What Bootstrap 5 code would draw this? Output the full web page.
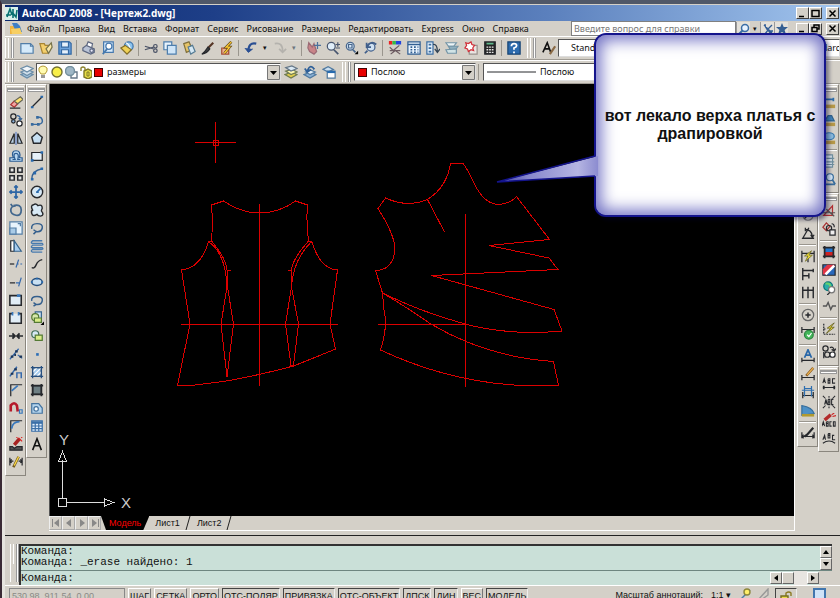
<!DOCTYPE html>
<html lang="ru">
<head>
<meta charset="utf-8">
<meta name="viewport" content="width=device-width, initial-scale=1">
<title>AutoCAD 2008 - [Чертеж2.dwg]</title>
<link href="https://cdn.jsdelivr.net/npm/bootstrap@5.3.0/dist/css/bootstrap.min.css" rel="stylesheet">
<style>
:root{--face:#d4d0c8;--dim:#808080;--mint:#cae0d8}
body{background:var(--face);font-family:"Noto Sans","Liberation Sans",sans-serif;font-size:9px;line-height:12px;color:#111;overflow:hidden}
button,select,input{font:inherit;color:inherit;border-radius:0}
.app{height:100vh;border-top:4px solid #505868;border-left:2px solid #3a2a35;box-shadow:inset 3px 0 0 #e6e4de}
.inner{padding-left:3px;min-height:0}
.titlebar{height:16px;margin-top:1px;background:linear-gradient(90deg,#0c2a70,#1e3f88 25%,#5b80bd 65%,#a2c5ee);color:#fff;font:bold 10px/15px "Noto Sans",sans-serif;padding-right:1px}
.wbtn{width:13px;height:12px;padding:0;border:1px solid;border-color:#fff #404040 #404040 #fff;background:var(--face);display:flex;align-items:center;justify-content:center}
.wbtn svg{width:9px;height:9px;stroke:#000;fill:none;stroke-width:1.5}
.menubar{height:15px;padding-right:1px}
.menus{gap:8px}
.menubar a{color:#111;text-decoration:none;white-space:nowrap}
.ask{width:165px;height:15px;border:1px solid #808080;background:#fff;color:#777;padding:0 2px}
.ask::placeholder{color:#777;opacity:1}
.mini{width:14px;height:14px;padding:0;border:0;border-left:1px solid #999;background:#e4e1da;display:flex;align-items:center;justify-content:center}
.mini svg{width:12px;height:12px}
.bar{height:24px;border-top:1px solid #fff;border-bottom:1px solid #a09c94}
.grip{width:8px;height:20px;flex:none;border:solid #fff;border-width:0 1px;box-shadow:1px 0 0 #999,inset -1px 0 0 #999}
.grip::before{content:"";display:block;width:2px;height:20px;margin-left:1px;border-right:1px solid #fff}
.tb{width:19px;height:18px;flex:none;padding:0;border:0;background:none;display:flex;align-items:center;justify-content:center}
.tb svg{width:14px;height:14px}
.ic{fill:none;flex:none}
.ic:not([stroke]){stroke:#26282c}
.ic:not([stroke-width]){stroke-width:1.4}
.drop{width:10px;height:18px;padding:0;border:0;background:none;font-size:7px;line-height:18px;flex:none}
.vsep{width:1px;height:16px;margin:0 2px;background:#9a968e;flex:none}
.hsep{height:1px;margin:2px 1px 1px;background:#9a968e;border-bottom:1px solid #fff;box-sizing:content-box}
.combo{height:18px;background:#fff;border:1px solid #555;border-right-color:#ddd;border-bottom-color:#ddd;display:flex;align-items:center}
.combo select{appearance:none;border:0;background:#fff;flex:1 1 0;min-width:0;height:16px;padding:0 2px;line-height:14px}
.combo select.arrow{background:#fff url("data:image/svg+xml,%3Csvg xmlns='http://www.w3.org/2000/svg' width='13' height='15'%3E%3Cpath d='M.5.5h12v14H.5z' fill='%23d4d0c8' stroke='%23777'/%3E%3Cpath d='M3 6h7l-3.500 4z'/%3E%3C/svg%3E") right center no-repeat}
.combo .inset{padding-left:12px}
.dims{width:31px}
.layers{width:245px;gap:2px}.colors{width:122px;padding-left:3px}
.ltype{padding-left:3px;margin-right:100px}
.swatch{width:9px;height:9px;background:#e80000;border:1px solid #400;flex:none}
.stage{min-height:0}
.center{min-width:0}
.side{width:44px;flex:none}
.side .panel{width:21px;border:1px solid;border-color:#fff #8a867e #8a867e #fff}
.side.right{width:46px;padding-left:2px;border-left:1px solid #fff}
.panel.end{padding-bottom:4px}
.hgrip{height:3px;margin:1px 1px 4px;border-top:1px solid #fff;border-bottom:1px solid #999;box-shadow:0 3px 0 -1px #fff,0 3px 0 #999}
.field{background:#000;min-height:0;overflow:hidden;border-left:1px solid #555}
.field svg{display:block;width:745px}
.tabs{height:15px;border-bottom:1px solid #fff;font:9px/14px "Liberation Sans",sans-serif}
.tabs .page{width:13px;height:14px;padding:0;border:1px solid;border-color:#eee #aaa #aaa #eee;background:var(--face);display:flex;align-items:center;justify-content:center}
.page svg{width:10px;height:10px;fill:#888}
.sheet{border:0;padding:0 5px 0 6px;height:14px;background:none;font:inherit}
.sheet.on{background:#000;color:#f00;padding:0 8px;clip-path:polygon(0 0,100% 0,calc(100% - 6px) 100%,5px 100%)}
.slash{width:6px;height:14px;stroke:#222;fill:none}
.splitter{height:5px;border-bottom:1px solid #222}
.command{padding:8px 8px 0 5px;height:50px;border-bottom:1px solid #fff}
.cgrip{height:38px;margin-right:1px}
.console{border-top:2px solid #333;border-left:2px solid #333;font:11px/11px "Liberation Mono",monospace;background:var(--face)}
.log{height:25px;background:var(--mint);border-bottom:1px solid #6e8680}
.log p{margin:0;white-space:pre}
.prompt{background:var(--mint);height:14px}
.prompt input{border:0;background:none;padding:0;min-width:0;outline:0}
.gutter{width:13px;height:14px;background:#e8e5e1}
.corner{width:13px;height:14px;background:var(--face)}
.sb{width:12px;height:12px;padding:0;border:1px solid;border-color:#fff #666 #666 #fff;background:var(--face);display:flex;align-items:center;justify-content:center}
.sb svg{width:6px;height:6px;fill:#000}
.status{height:12px;overflow:hidden;padding:2px 14px 0 4px;font:9px/14px "Liberation Sans",sans-serif;white-space:nowrap;color:#111}
.modes{gap:3px}
.coords{width:116px;height:18px;border:1px solid #888;color:#8a8a86;padding-left:2px;margin-right:3px}
.mode{height:18px;border:1px solid;border-color:#fff #777 #777 #fff;background:none;padding:0 1px 2px;line-height:14px;white-space:nowrap}
.mode.down{border-color:#444 #eee #eee #444}
.callout{position:absolute;top:29px;right:14px;width:232px;height:184px;z-index:5}
.bubble{height:100%;border:2px solid #14148c;border-radius:12px;background:#fff;box-shadow:inset 0 0 16px 5px #7272c4,3px 3px 4px rgba(0,0,40,.45);font:bold 16px/18px "Liberation Sans",sans-serif;color:#111;text-align:center}
.tail{position:absolute;right:calc(100% - 4px);top:121px;width:102px;height:30px}
</style>
<script src="https://cdn.jsdelivr.net/npm/bootstrap@5.3.0/dist/js/bootstrap.bundle.min.js"></script>
</head>
<body>
<div class="app d-flex flex-column position-relative">
<div class="inner d-flex flex-column flex-grow-1">

<header class="titlebar d-flex align-items-center flex-shrink-0">
  <svg width="13" height="13" viewBox="0 0 13 13" class="me-1 flex-shrink-0"><path fill="#d8efe9" d="M0 0h13v13H0z"/><path d="M2 10l3-8 2 6M1 8h5M8 2v9M7 5l4 5 1-7" stroke="#087070" stroke-width="1.600" fill="none"/></svg>
  <span class="flex-grow-1">AutoCAD 2008 - [Чертеж2.dwg]</span>
  <button class="wbtn" aria-label="Свернуть"><svg viewBox="0 0 9 9"><path d="M1 7.500h5"/></svg></button>
  <button class="wbtn" aria-label="Развернуть"><svg viewBox="0 0 9 9"><path d="M1 1.500h7v6H1z"/></svg></button>
  <button class="wbtn ms-1" aria-label="Закрыть"><svg viewBox="0 0 9 9"><path d="M1.500 1.500l6 6m0-6l-6 6"/></svg></button>
</header>

<nav class="menubar d-flex align-items-center flex-shrink-0">
  <svg width="14" height="13" viewBox="0 0 14 13" class="mx-1 flex-shrink-0"><path d="M1 4h9v8H1z" fill="#f0b440"/><path d="M3 1h5l3 3 2 6H7z" fill="#3f7fc4"/><path d="M2 7l9-1 2 6H3z" fill="#f7cf63"/></svg>
  <div class="menus d-flex flex-grow-1">
    <a href="#">Файл</a><a href="#">Правка</a><a href="#">Вид</a><a href="#">Вставка</a><a href="#">Формат</a><a href="#">Сервис</a><a href="#">Рисование</a><a href="#">Размеры</a><a href="#">Редактировать</a><a href="#">Express</a><a href="#">Окно</a><a href="#">Справка</a>
  </div>
  <input class="ask" type="text" placeholder="Введите вопрос для справки" aria-label="Введите вопрос для справки">
  <button class="mini" aria-label="Поиск"><svg viewBox="0 0 12 12"><circle cx="7" cy="5" r="3.500" fill="#e7f2ff" stroke="#3a6ea5" stroke-width="1.500"/><path d="M4.500 7.500L1 11" stroke="#3a6ea5" stroke-width="2"/></svg></button>
  <button class="drop" aria-label="Параметры поиска">▾</button>
  <button class="mini" aria-label="Связь"><svg viewBox="0 0 12 12" fill="none" stroke="#335f96" stroke-width="1.300"><path d="M2 2l8 8M3 1q0 7 8 7M6 6l4-4M3 11l3-4 3 4z"/></svg></button>
  <button class="mini me-2" aria-label="Избранное"><svg viewBox="0 0 12 12"><path d="M6 0l1.700 4H12L8.600 7 10 11.500 6 9l-4 2.500L3.400 7 0 4h4.300z" fill="#355f92"/></svg></button>
  <button class="wbtn" aria-label="Свернуть чертеж"><svg viewBox="0 0 9 9"><path d="M1 7.500h5"/></svg></button>
  <button class="wbtn" aria-label="Восстановить чертеж"><svg viewBox="0 0 9 9"><path d="M3 3V1h5v4H6M1 3.500h5v4H1z"/></svg></button>
  <button class="wbtn ms-1" aria-label="Закрыть чертеж"><svg viewBox="0 0 9 9"><path d="M1.500 1.500l6 6m0-6l-6 6"/></svg></button>
</nav>

<div class="bar d-flex align-items-center flex-shrink-0" role="toolbar" aria-label="Стандартная">
  <span class="grip me-1"></span>
  <button class="tb" aria-label="Создать"><svg class="ic" viewBox="0 0 16 16"><path d="M1 3h11l3 3v8H1z" fill="#d5eafa" stroke="#527ea8"/><path d="M12 3v3h3" stroke="#527ea8"/></svg></button>
  <button class="tb" aria-label="Открыть"><svg class="ic" viewBox="0 0 16 16"><path d="M1 3h5l1 2h6l-3 9H4z" fill="#f4cf6c" stroke="#a88433"/><path d="M8 9l6-7 1 5-4 7z" fill="#f9e7a9" stroke="#77724a"/></svg></button>
  <button class="tb" aria-label="Сохранить"><svg class="ic" viewBox="0 0 16 16"><path d="M1 1h12l2 2v12H1z" fill="#6ea3dd" stroke="#3569a3"/><path d="M4 1h8v6H4zM4 10h8v5H4z" fill="#e7f1fb" stroke="#3569a3"/></svg></button>
  <span class="vsep"></span>
  <button class="tb" aria-label="Печать"><svg class="ic" viewBox="0 0 16 16" stroke="#5d6780"><path d="M5 6l2-5 5 2-1 5z" fill="#fff"/><path d="M1 8l4-3 9 4v4l-4 2-9-4z" fill="#b9c3d6"/><circle cx="11" cy="11" r="2" fill="#eef"/></svg></button>
  <button class="tb" aria-label="Просмотр"><svg class="ic" viewBox="0 0 16 16" stroke="#4779ae"><path d="M3 1h11v12H3z" fill="#d9ecfc"/><circle cx="9" cy="6" r="3.500" fill="#fff"/><path d="M7 9l-5 6" stroke-width="2"/></svg></button>
  <button class="tb" aria-label="Публикация"><svg class="ic" viewBox="0 0 16 16"><circle cx="10" cy="6" r="5" fill="#8cc3ee" stroke="#3f76ad"/><path d="M7 2q4 2 5 8" stroke="#fff"/><path d="M1 8l5-3 7 5-5 5z" fill="#f0d257" stroke="#826d28"/></svg></button>
  <span class="vsep"></span>
  <button class="tb" aria-label="Вырезать"><svg class="ic" viewBox="0 0 16 16" stroke="#4b5366"><path d="M1 6l10 3M1 10l10-3"/><circle cx="13" cy="6" r="2"/><circle cx="13" cy="11" r="2"/></svg></button>
  <button class="tb" aria-label="Копировать"><svg class="ic" viewBox="0 0 16 16" stroke="#4d7ead"><path d="M1 1h9v9H1z" fill="#e8f3fc"/><path d="M5 5h10v10H5z" fill="#cfe5f8"/></svg></button>
  <button class="tb" aria-label="Вставить"><svg class="ic" viewBox="0 0 16 16"><path d="M2 3l6-2 4 9-7 3z" fill="#e6c468" stroke="#82713c"/><path d="M7 7l5-2 3 7-5 3z" fill="#d5e8f4" stroke="#557b94"/></svg></button>
  <button class="tb" aria-label="Копировать свойства"><svg class="ic" viewBox="0 0 16 16"><path d="M14 2L8 8" stroke="#553525" stroke-width="2.500"/><path d="M8 7l2 2q-3 5-9 6 4-3 7-8z" fill="#444"/></svg></button>
  <button class="tb" aria-label="Редактор блоков"><svg class="ic" viewBox="0 0 16 16"><path d="M2 8h8v7H2z" fill="#efb28d" stroke="#a44c36"/><path d="M13 1L7 7h4l-6 7" stroke="#5e4516" stroke-width="3"/><path d="M13 1L7 7h4l-6 7" stroke="#fc3" stroke-width="1.500"/></svg></button>
  <span class="vsep"></span>
  <button class="tb" aria-label="Отменить"><svg class="ic" viewBox="0 0 16 16" stroke="#2a4f93" stroke-width="2.500"><path d="M14 3Q5 1 5 12"/><path d="M1 8l4 5 5-4" fill="#2a4f93" stroke-width="1"/></svg></button>
  <button class="drop" aria-label="Список отмены">▾</button>
  <button class="tb" aria-label="Вернуть"><svg class="ic" viewBox="0 0 16 16" stroke="#b4b2ad" stroke-width="2"><path d="M2 3q9-2 9 9"/><path d="M7 9l4 4 4-4"/></svg></button>
  <button class="drop text-secondary" aria-label="Список возврата">▾</button>
  <span class="vsep"></span>
  <button class="tb" aria-label="Панорамирование"><svg class="ic" viewBox="0 0 16 16"><path d="M2 2l4 5 2-4 3 9-3 3-5-3-2-4z" fill="#c98488" stroke="#9b6b75"/><path d="M12 1v8M8 5h8" stroke="#4d719c"/></svg></button>
  <button class="tb" aria-label="Зумирование"><svg class="ic" viewBox="0 0 16 16" stroke="#48566f"><circle cx="6" cy="6" r="4.500" fill="#e0eefa"/><path d="M9 10l5 5" stroke-width="2"/><path d="M11 4h5M13.500 1.500v5M11 8h5"/></svg></button>
  <button class="tb" aria-label="Зумирование рамкой"><svg class="ic" viewBox="0 0 16 16" stroke="#48668b"><circle cx="6" cy="6" r="4.500" fill="#d6e8f8"/><path d="M4 4h4v4H4z"/><path d="M9 10l3 3" stroke-width="2"/><path d="M15 11v4h-4z" fill="#000" stroke="none"/></svg></button>
  <button class="tb" aria-label="Предыдущий вид"><svg class="ic" viewBox="0 0 16 16" stroke="#405f8b"><circle cx="8" cy="7" r="4.500" fill="#cfe1f2"/><path d="M4 11l-3 3M14 4Q8-1 4 6M3 2v5h5" stroke-width="2"/></svg></button>
  <span class="vsep"></span>
  <button class="tb" aria-label="Свойства"><svg class="ic" viewBox="0 0 16 16"><path d="M1 2h4" stroke="#e22" stroke-width="4"/><path d="M5 2h4" stroke="#3b4" stroke-width="4"/><path d="M9 2h6" stroke="#24d" stroke-width="4"/><path d="M2 7l5 5-4 3M13 5l-6 5 7 5M2 11h12" stroke="#6b5a60"/></svg></button>
  <button class="tb" aria-label="Центр управления"><svg class="ic" viewBox="0 0 16 16" stroke="#315f93"><path d="M1 1h14v14H1z" fill="#eaf4fd"/><path d="M1 4h14M4 7h2m2 0h2m2 0h1M4 10h2m2 0h2m2 0h1M4 13h2m2 0h2m2 0h1" stroke-width="1.800"/></svg></button>
  <button class="tb" aria-label="Палитры"><svg class="ic" viewBox="0 0 16 16" stroke="#3b6da2"><path d="M1 1h7v14H1z" fill="#e4f0fb"/><path d="M3 4h3M3 8h3M3 12h3" stroke-width="2"/><path d="M8 4q5-1 5 8m-3-3l3 4 3-4" stroke="#345"/></svg></button>
  <button class="tb" aria-label="Подшивки"><svg class="ic" viewBox="0 0 16 16" stroke="#7394a6"><path d="M1 2h12l-3 4H4z" fill="#edf4f6"/><path d="M4 6h11l-3 4H6z" fill="#8fb0bf"/><path d="M1 10l12-1v5H3z" fill="#d0e3e6"/></svg></button>
  <button class="tb" aria-label="Пометки"><svg class="ic" viewBox="0 0 16 16"><path d="M6 5h9v10H6z" fill="#e9e5e2" stroke="#99908c"/><path d="M2 2l3 1 3-2 1 3 3 1-2 3 1 3-3-1-3 2-1-3-3-1 2-3z" stroke="#d22e38" fill="#fff"/></svg></button>
  <button class="tb" aria-label="Калькулятор"><svg class="ic" viewBox="0 0 16 16"><path d="M2 1h12v14H2z" fill="#242424"/><path d="M4 3h8" stroke="#5fb78b" stroke-width="2"/><path d="M4 7h2m1 0h2m1 0h2M4 10h2m1 0h2m1 0h2M4 13h2m1 0h2m1 0h2" stroke="#e8e8e8" stroke-width="1.700"/></svg></button>
  <span class="vsep"></span>
  <button class="tb" aria-label="Справка"><svg class="ic" viewBox="0 0 16 16"><path d="M1 1h14v14H1z" fill="#2c6bae" stroke="#174574"/><path d="M5 6q0-3 3-3t3 2.500Q11 7 8 8v2m0 2v2" stroke="#fff" stroke-width="2"/></svg></button>
  <span class="grip ms-1 me-1"></span>
  <button class="tb" aria-label="Текстовый стиль"><svg class="ic" viewBox="0 0 16 16"><path d="M1 13L6 2l4 11M3 9h6" stroke="#111" stroke-width="1.800"/><path d="M15 6l-6 9" stroke="#8a6a45" stroke-width="2.500"/></svg></button>
  <div class="combo flex-grow-1"><select class="inset" aria-label="Стиль текста"><option>Standard</option></select></div>
  <div class="combo dims ms-2"><select class="p-0" aria-label="Размерный стиль"><option>&nbsp;&nbsp;&nbsp;&nbsp;&nbsp;dard</option></select></div>
</div>

<div class="bar d-flex align-items-center flex-shrink-0" role="toolbar" aria-label="Слои и свойства">
  <span class="grip me-1"></span>
  <button class="tb" aria-label="Диспетчер слоев"><svg class="ic" viewBox="0 0 16 16" stroke="#6a8ca7"><path d="M1 11l7-3 7 3-7 4z" fill="#a5c5df"/><path d="M1 8l7-3 7 3-7 4z" fill="#cfdfeb"/><path d="M1 4l7-3 7 3-7 4z" fill="#f2f6fa"/></svg></button>
  <div class="combo layers">
    <svg class="ic" width="12" height="14" viewBox="0 0 12 14"><path d="M4 9Q1 6 2 3q4-4 8 0 1 3-2 6z" fill="#fffbb0" stroke="#b39a35" stroke-width="1"/><path d="M4 10h4v3H4z" fill="#999" stroke="none"/></svg>
    <svg class="ic" width="12" height="12" viewBox="0 0 12 12"><circle cx="6" cy="6" r="5" fill="#f8ef48" stroke="#737130"/></svg>
    <svg class="ic" width="13" height="13" viewBox="0 0 13 13"><path d="M6 6h6v6H6z" fill="#fff" stroke="#678"/><circle cx="5" cy="5" r="4.500" fill="#9fb7c6" stroke="#74909f"/></svg>
    <svg class="ic" width="12" height="13" viewBox="0 0 12 13"><path d="M1 5V2q2-2 4 0v3" stroke="#8c842f"/><path d="M4 5l4-2 4 2v6l-4 2-4-2z" fill="#e8df45" stroke="#817a28"/><path d="M7 6v4h2V6z" stroke="#817a28" stroke-width="1"/></svg>
    <span class="swatch"></span>
    <select class="arrow" aria-label="Слой"><option>размеры</option></select>
  </div>
  <button class="tb" aria-label="Слой объекта"><svg class="ic" viewBox="0 0 16 16" stroke="#6f7b51"><path d="M1 11l8-3 6 3-7 4z" fill="#e2cd4c"/><path d="M2 7l7-2 6 3-7 3z" fill="#fff8b1"/><path d="M2 3l7-2 6 3-7 3z" fill="#dae9f4" stroke="#678"/></svg></button>
  <button class="tb" aria-label="Предыдущий слой"><svg class="ic" viewBox="0 0 16 16" stroke="#50799f"><path d="M1 11l8-3 6 3-7 4z" fill="#87aed3"/><path d="M3 8l6-2 5 2-6 3z" fill="#e6f1fa"/><path d="M13 5Q8-2 5 7M2 4l3 4 4-3" stroke="#2e5f98" stroke-width="2"/></svg></button>
  <button class="tb" aria-label="Состояния слоев"><svg class="ic" viewBox="0 0 16 16" stroke="#50799f"><path d="M1 5l6-3 6 3-6 3z" fill="#cbdff0"/><path d="M6 7h9v8H6z" fill="#fff"/><path d="M6 8h9" stroke-width="2.500" stroke="#286baf"/></svg></button>
  <span class="grip ms-1 me-1"></span>
  <div class="combo colors"><span class="swatch me-1"></span><select class="arrow p-0" aria-label="Цвет"><option>Послою</option></select></div>
  <span class="vsep me-1"></span>
  <div class="combo ltype flex-grow-1"><svg class="ic me-1" width="49" height="2"><path d="M0 1h49" stroke-width="1"/></svg><select class="arrow p-0" aria-label="Тип линий"><option>Послою</option></select></div>
</div>

<main class="stage d-flex flex-grow-1">
  <aside class="side d-flex align-items-start">
    <div class="panel end" role="toolbar" aria-label="Редактирование">
      <div class="hgrip"></div>
      <button class="tb" aria-label="Стереть"><svg class="ic" viewBox="0 0 16 16"><path d="M2 11l4-4 4 3-4 4z" fill="#f2a3a0" stroke="#a33"/><path d="M6 7l7-5 3 3-6 5z" fill="#ffe36d" stroke="#665"/><path d="M1 15h12"/></svg></button>
      <button class="tb" aria-label="Копировать объект"><svg class="ic" viewBox="0 0 16 16"><circle cx="5" cy="4" r="3"/><circle cx="5" cy="9.500" r="2" fill="#8bb6df"/><circle cx="12" cy="12" r="3" fill="#fff"/><path d="M9 3q4 0 4 4m-2-1l2 2 2-2" stroke="#35659c"/></svg></button>
      <button class="tb" aria-label="Зеркало"><svg class="ic" viewBox="0 0 16 16"><path d="M6 3v11H1zM10 3v11h5z" fill="#b9cfe2"/><path d="M8 1v15" stroke="#36c" stroke-width="1"/></svg></button>
      <button class="tb" aria-label="Подобие"><svg class="ic" viewBox="0 0 16 16" stroke="#2b5c92"><path d="M1 14v-4h4Q2 2 8 2t4 8h3v4z" fill="#bad8f2"/><path d="M4 12h3Q4 5 8 5t2 7h3"/></svg></button>
      <button class="tb" aria-label="Массив"><svg class="ic" viewBox="0 0 16 16" stroke-width="1.700"><path d="M1 1h5v5H1zM10 1h5v5h-5zM1 10h5v5H1zM10 10h5v5h-5z" fill="#e7e7e7"/></svg></button>
      <button class="tb" aria-label="Перенести"><svg class="ic" viewBox="0 0 16 16" stroke="#2e66a5" stroke-width="2"><path d="M8 1v14M1 8h14M6 3l2-2 2 2M6 13l2 2 2-2M3 6L1 8l2 2M13 6l2 2-2 2"/></svg></button>
      <button class="tb" aria-label="Повернуть"><svg class="ic" viewBox="0 0 16 16" stroke="#42678e" stroke-width="2"><path d="M5 3Q14 1 14 8t-6 6-6-6q0-2 2-4M2 1l2 3 4-1"/></svg></button>
      <button class="tb" aria-label="Масштаб"><svg class="ic" viewBox="0 0 16 16" stroke="#547ea6"><path d="M1 1h14v14H1z" fill="#e8f4fd"/><path d="M1 8h7v7H1z" fill="#a9cbe7"/><path d="M10 3h3v3"/></svg></button>
      <button class="tb" aria-label="Растянуть"><svg class="ic" viewBox="0 0 16 16"><path d="M2 2h4v12H2z" fill="#fff"/><path d="M6 2l8 12H6z" fill="#a8cdef" stroke="#37658e"/></svg></button>
      <button class="tb" aria-label="Обрезать"><svg class="ic" viewBox="0 0 16 16"><path d="M1 8h5"/><path d="M8 12l3-9M9 8h2m2 0h2" stroke="#3569ad"/></svg></button>
      <button class="tb" aria-label="Удлинить"><svg class="ic" viewBox="0 0 16 16"><path d="M1 9h6"/><path d="M8 9h4M11 13l3-10" stroke="#3569ad"/></svg></button>
      <button class="tb" aria-label="Разорвать в точке"><svg class="ic" viewBox="0 0 16 16" stroke-width="1.800"><path d="M1 3h13v11H1z" fill="#e1edf6"/><path d="M9 3h4" stroke="#3878bd" stroke-width="3"/></svg></button>
      <button class="tb" aria-label="Разорвать"><svg class="ic" viewBox="0 0 16 16" stroke-width="1.800"><path d="M4 3H1v11h13V3h-3" fill="#e1edf6"/><path d="M4 1v4M11 1v4" stroke="#3878bd" stroke-width="2"/></svg></button>
      <button class="tb" aria-label="Соединить"><svg class="ic" viewBox="0 0 16 16" stroke-width="1.800"><path d="M0 8h6M10 8h6M4 5l3 3-3 3M12 5L9 8l3 3" fill="#234"/></svg></button>
      <button class="tb" aria-label="Поделить"><svg class="ic" viewBox="0 0 16 16"><path d="M1 14L11 2M10 9l5 4" stroke="#3569ad"/><path d="M2 11h3M7 5h3M12 11h3M6 9h2" stroke="#1b3558" stroke-width="2.500"/></svg></button>
      <button class="tb" aria-label="Разметить"><svg class="ic" viewBox="0 0 16 16"><path d="M1 13L9 2M9 15V9h5v6" stroke="#3569ad" stroke-width="1.700"/><path d="M2 10h3M6 5h3" stroke="#1b3558" stroke-width="2.500"/></svg></button>
      <button class="tb" aria-label="Фаска"><svg class="ic" viewBox="0 0 16 16"><path d="M2 15V2h13"/><path d="M3 9l7-6" stroke="#3978bc" stroke-width="2"/></svg></button>
      <button class="tb" aria-label="Привязка"><svg class="ic" viewBox="0 0 16 16"><path d="M2 12V5q4-5 7 0l1 7" stroke="#b51a2b" stroke-width="3"/><path d="M12 10h3v4h-3z" stroke="#3678bd"/></svg></button>
      <button class="tb" aria-label="Сопряжение"><svg class="ic" viewBox="0 0 16 16"><path d="M2 15V2h13"/><path d="M3 11q1-8 9-8" stroke="#3978bc" stroke-width="2"/></svg></button>
      <button class="tb" aria-label="Расчленить"><svg class="ic" viewBox="0 0 16 16"><path d="M1 11h3l2 2 3-2h6v4H1z" fill="#555"/><path d="M6 9l6-7" stroke="#a82322" stroke-width="4"/><path d="M11 1l4 4M14 1l1-1M9 1V0" stroke="#d22"/></svg></button>
      <button class="tb" aria-label="Правка размера"><svg class="ic" viewBox="0 0 16 16"><path d="M1 3v9M15 3v9M1 7h4m6 0h4M3 5L1 7l2 2M13 5l2 2-2 2"/><path d="M11 2l-6 12" stroke="#735a20" stroke-width="3"/><path d="M11 2l-5 10" stroke="#fd4" stroke-width="1.500"/></svg></button>
    </div>
    <div class="panel end" role="toolbar" aria-label="Рисование">
      <div class="hgrip"></div>
      <button class="tb" aria-label="Отрезок"><svg class="ic" viewBox="0 0 16 16"><path d="M2 14L14 2"/><path d="M1 14h3M12 2h3" stroke="#2869ad" stroke-width="2.500"/></svg></button>
      <button class="tb" aria-label="Полилиния"><svg class="ic" viewBox="0 0 16 16" stroke="#376a9f"><path d="M2 13h8q5-1 4-5-1-4-5-3" stroke-width="1.700"/><path d="M7 5h3M1 13h3M8 13h3" stroke-width="3"/></svg></button>
      <button class="tb" aria-label="Многоугольник"><svg class="ic" viewBox="0 0 16 16"><path d="M8 2l6 5-2 7H4L2 7z" fill="#c6dff2" stroke-width="1.600"/></svg></button>
      <button class="tb" aria-label="Прямоугольник"><svg class="ic" viewBox="0 0 16 16"><path d="M2 4h12v9H2z" fill="#e6f1f9"/><path d="M1 13h3M12 4h3" stroke="#2869ad" stroke-width="3"/></svg></button>
      <button class="tb" aria-label="Дуга"><svg class="ic" viewBox="0 0 16 16"><path d="M2 14Q2 4 14 2" stroke="#345f90" stroke-width="1.700"/><path d="M1 14h3M12 2h3M4 7h3" stroke="#2869ad" stroke-width="3"/></svg></button>
      <button class="tb" aria-label="Круг"><svg class="ic" viewBox="0 0 16 16"><circle cx="8" cy="8" r="6.500" fill="#d7e9f6" stroke-width="1.600"/><path d="M8 8l4-4M7 8h3" stroke="#2869ad" stroke-width="2"/></svg></button>
      <button class="tb" aria-label="Облако"><svg class="ic" viewBox="0 0 16 16"><path d="M3 8Q0 3 4 2q3-2 5 1 5-2 5 3-1 2-1 3 4 5-1 6-3 0-4-2-5 3-6-1-1-3 1-4z" fill="#d9eaf6" stroke-width="1.600"/></svg></button>
      <button class="tb" aria-label="Сплайн"><svg class="ic" viewBox="0 0 16 16" stroke="#345f8d" stroke-width="1.700"><path d="M2 9Q1 3 8 3t6 5-7 4M4 10l3 2-3 3"/></svg></button>
      <button class="tb" aria-label="Спираль"><svg class="ic" viewBox="0 0 16 16" stroke="#477aae" stroke-width="1.500"><path d="M14 2H3q-3 3 0 3h11q2 2-1 2H3q-3 3 0 3h11q2 2-1 2H3q-3 2 0 3h11"/></svg></button>
      <button class="tb" aria-label="Кривая"><svg class="ic" viewBox="0 0 16 16"><path d="M2 12q3 2 5-3t7-6" stroke-width="1.600"/></svg></button>
      <button class="tb" aria-label="Эллипс"><svg class="ic" viewBox="0 0 16 16"><ellipse cx="8" cy="8" rx="6" ry="4" fill="#c9e0f2" stroke="#244d7c" stroke-width="1.700"/><path d="M7 4h2M1 8h2M13 8h2" stroke="#2869ad" stroke-width="2"/></svg></button>
      <button class="tb" aria-label="Эллиптическая дуга"><svg class="ic" viewBox="0 0 16 16" stroke="#345f8d" stroke-width="1.700"><path d="M2 9q-1-5 6-5t6 5-7 4M4 11l3 2-3 2"/></svg></button>
      <button class="tb" aria-label="Вставить блок"><svg class="ic" viewBox="0 0 16 16"><path d="M6 1h7v8H6z" fill="#cfe4f5" stroke="#37648e"/><circle cx="6" cy="7" r="4" fill="#d6e8aa" stroke="#547a34"/><path d="M5 8h8v5H5z" fill="#d9ed88" stroke="#547a34"/><path d="M16 12v4h-4z" fill="#000" stroke="none"/></svg></button>
      <button class="tb" aria-label="Создать блок"><svg class="ic" viewBox="0 0 16 16"><circle cx="6" cy="6" r="4" fill="#d6e8f4" stroke="#426f57"/><path d="M6 7h8v6H6z" fill="#d9ed88" stroke="#547a34"/></svg></button>
      <button class="tb" aria-label="Точка"><svg class="ic" viewBox="0 0 16 16"><path d="M7 7h3v3H7z" fill="#2c6eb6" stroke="none"/></svg></button>
      <button class="tb" aria-label="Штриховка"><svg class="ic" viewBox="0 0 16 16"><path d="M3 3h10v10H3z" fill="#a5cbed"/><path d="M3 8l5-5M3 13L13 3M8 13l5-5" stroke="#fff"/><path d="M3 1v14M13 1v14M1 3h14M1 13h14" stroke="#28507f" stroke-width="1.500"/></svg></button>
      <button class="tb" aria-label="Градиент"><svg class="ic" viewBox="0 0 16 16"><path d="M3 3h10v10H3z" fill="#6e7f83"/><path d="M3 1v14M13 1v14M1 3h14M1 13h14" stroke-width="2"/></svg></button>
      <button class="tb" aria-label="Область"><svg class="ic" viewBox="0 0 16 16" stroke="#44739f"><path d="M2 3h8l4 5v6H2z" fill="#b4d4ed"/><circle cx="7" cy="9" r="2.500" fill="#fff"/></svg></button>
      <button class="tb" aria-label="Таблица"><svg class="ic" viewBox="0 0 16 16" stroke="#3b6fa7"><path d="M2 2h12v12H2z" fill="#e0eefb"/><path d="M2 4h12" stroke-width="3"/><path d="M6 4v10M10 4v10M2 8h12M2 11h12"/></svg></button>
      <button class="tb" aria-label="Многострочный текст"><svg class="ic" viewBox="0 0 16 16"><path d="M3 15L8 2l5 13M5 10h6" stroke="#111" stroke-width="1.800"/></svg></button>
    </div>
  </aside>

  <section class="center d-flex flex-column flex-grow-1">
    <div class="field flex-grow-1">
      <svg viewBox="50 84 745 433" height="433" fill="none" stroke="#dc0000" stroke-width="1" shape-rendering="crispEdges" role="img" aria-label="Лекало верха платья">
        <path d="M195 142.500h41M215.500 122v41M213 140h5v5h-5z"/>
        <path d="M211.500 205L223.500 201Q241 213 259.500 213 279 213 295.500 201L307.500 205Q306 222 308.500 241L311.500 241Q320 269 337.500 270L330 324 335.500 349Q314 358 293.500 366 260 375 226.500 381L191 385.500H177.500L190 324 181.500 270Q201 268 208.500 241.500L211.500 241Q213 222 211.500 205M211.500 241Q226 258 227 270L231 270M208.500 241.500Q226 254 227 287L221 324 227 377 233.500 324 227.500 287V270M308.500 241Q292 260 291.500 270H288M311.500 241.500Q293 260 291.500 287L285.500 324 291 365.500H293.500L298.500 324 291.500 287V270M181 324.500h157M259.500 204v182"/>
        <path d="M450.500 163.500H463Q467 168 475 185 485 205 500 204.500 511 203 516.500 196.500L549.500 239.500 489 245.500 549 258 558 269.500 431.500 275.500 554 309.500 562 331Q511 336 465 324 421 312 382.500 293 408 308 430 323.500 486 357 553.500 361.500L558.500 385.500Q466 390 380.500 350 388 327 384 310L382.500 293 375.500 270.500Q393 270 395 250 395 235 378 208.500L385.500 198Q407 208 427.500 199.500 447 187 450.500 163.500M427.500 199.500L444.500 232M378 324.500H466M465.500 214V387"/>
        <g stroke="#ddd"><path d="M62.500 499V460M66 502.500H105M58.500 498.500h8v8h-8zM58.500 461.500l4-10 4 10zM104.500 499l9 3.500-9 3.500z"/></g>
        <g fill="#ccc" stroke="none" font-family="Liberation Sans, sans-serif" font-size="15"><text x="59" y="445">Y</text><text x="121" y="508">X</text></g>
      </svg>
    </div>
    <div class="tabs d-flex flex-shrink-0">
      <button class="page" aria-label="Первый лист"><svg viewBox="0 0 10 10"><path d="M1 1h1v8H1zM8 1v8L3 5z"/></svg></button>
      <button class="page" aria-label="Предыдущий лист"><svg viewBox="0 0 10 10"><path d="M7 1v8L2 5z"/></svg></button>
      <button class="page" aria-label="Следующий лист"><svg viewBox="0 0 10 10"><path d="M3 1v8l5-4z"/></svg></button>
      <button class="page" aria-label="Последний лист"><svg viewBox="0 0 10 10"><path d="M8 1h1v8H8zM2 1v8l5-4z"/></svg></button>
      <button class="sheet on">Модель</button>
      <button class="sheet">Лист1</button><svg class="slash" viewBox="0 0 6 14"><path d="M1 14L5 0"/></svg>
      <button class="sheet">Лист2</button><svg class="slash" viewBox="0 0 6 14"><path d="M1 14L5 0"/></svg>
    </div>
  </section>

  <aside class="side right d-flex align-items-start">
    <div class="panel end" role="toolbar" aria-label="Размеры">
      <div class="hgrip"></div>
      <button class="tb" aria-label="Линейный размер"><svg class="ic" viewBox="0 0 16 16"><path d="M1 3v10M15 3v10M1 8h14"/></svg></button>
      <button class="tb" aria-label="Параллельный размер"><svg class="ic" viewBox="0 0 16 16"><path d="M2 10l9-8M5 14l9-8M3 12l10-8"/></svg></button>
      <button class="tb" aria-label="Длина дуги"><svg class="ic" viewBox="0 0 16 16"><path d="M2 12q6-12 12 0"/></svg></button>
      <button class="tb" aria-label="Ордината"><svg class="ic" viewBox="0 0 16 16"><path d="M2 2v12h12M6 10l6-6"/></svg></button>
      <div class="hsep"></div>
      <button class="tb" aria-label="Радиус"><svg class="ic" viewBox="0 0 16 16"><circle cx="8" cy="8" r="6"/></svg></button>
      <button class="tb" aria-label="Излом"><svg class="ic" viewBox="0 0 16 16"><path d="M2 12l4-6 3 4 5-7"/></svg></button>
      <button class="tb" aria-label="Диаметр"><svg class="ic" viewBox="0 0 16 16"><circle cx="8" cy="8" r="6" stroke="#777"/><path d="M4 12l8-8"/></svg></button>
      <button class="tb" aria-label="Угловой размер"><svg class="ic" viewBox="0 0 16 16"><path d="M15 14H2L9 2M5 4q7 0 8 8M5 2v4M11 10l2 3 2-3" stroke-width="1.500"/></svg></button>
      <div class="hsep"></div>
      <button class="tb" aria-label="Быстрый размер"><svg class="ic" viewBox="0 0 16 16"><path d="M1 2v13M15 2v13M1 5h14M8 5v10"/><path d="M12 2L4 8h4l-3 6 8-7H9z" fill="#f1df35" stroke="#77732f" stroke-width="1"/></svg></button>
      <button class="tb" aria-label="Базовый размер"><svg class="ic" viewBox="0 0 16 16"><path d="M2 1v14M2 4h12M14 2v4M2 10h7M9 7v6" stroke-width="1.600"/></svg></button>
      <button class="tb" aria-label="Размерная цепь"><svg class="ic" viewBox="0 0 16 16"><path d="M2 2v13M8 2v13M14 2v13M2 6h12" stroke-width="1.600"/></svg></button>
      <div class="hsep"></div>
      <button class="tb" aria-label="Маркер центра"><svg class="ic" viewBox="0 0 16 16"><circle cx="8" cy="8" r="6.500" stroke="#666"/><path d="M5 8h6M8 5v6" stroke-width="1.700"/></svg></button>
      <button class="tb" aria-label="Проверка"><svg class="ic" viewBox="0 0 16 16"><path d="M1 1v7M15 1v7M1 4h14"/><circle cx="9" cy="10" r="5" fill="#45b75a" stroke="#2b8541"/><path d="M7 10l2 2 3-4" stroke="#fff"/></svg></button>
      <div class="hsep"></div>
      <button class="tb" aria-label="Текст размера"><svg class="ic" viewBox="0 0 16 16"><path d="M1 10v5M15 10v5M1 13h14"/><path d="M4 10l4-9 4 9M5 7h6" stroke="#2766a8" stroke-width="2"/></svg></button>
      <button class="tb" aria-label="Редактировать размер"><svg class="ic" viewBox="0 0 16 16"><path d="M1 9v6M15 9v6M1 12h14"/><path d="M14 1L6 10" stroke="#8a5a20" stroke-width="3"/><path d="M14 1L7 9" stroke="#eeb451" stroke-width="1.500"/></svg></button>
      <button class="tb" aria-label="Обновить размер"><svg class="ic" viewBox="0 0 16 16"><path d="M2 8v7M14 8v7M2 12h12"/><path d="M4 1v12M12 1v12M4 4h8M1 6h14" stroke="#2e6eaf"/></svg></button>
      <button class="tb" aria-label="Стиль размера"><svg class="ic" viewBox="0 0 16 16"><path d="M1 14V3q12 2 14 9z" fill="#4d91c7" stroke="#376f9d"/><path d="M1 14h14" stroke="#b09a30" stroke-width="3"/></svg></button>
      <div class="hsep"></div>
      <button class="tb" aria-label="Размерные стили"><svg class="ic" viewBox="0 0 16 16"><path d="M1 7v7M15 7v7M1 12h14M3 10l-2 2 2 2M13 10l2 2-2 2"/><path d="M14 2l-7 8-3 2" stroke-width="2.500"/></svg></button>
    </div>
    <div>
      <div class="panel end" role="toolbar" aria-label="Сведения">
        <div class="hgrip"></div>
        <button class="tb" aria-label="Расстояние"><svg class="ic" viewBox="0 0 16 16"><path d="M3 5h11M13 3v4" stroke="#2d6caa" stroke-width="2"/><path d="M1 13h14" stroke="#b69848" stroke-width="4"/></svg></button>
        <button class="tb" aria-label="Площадь"><svg class="ic" viewBox="0 0 16 16"><path d="M3 9l4-6h4l3 6z" fill="#4185bb" stroke="#33658e"/><path d="M1 13h14" stroke="#b69848" stroke-width="4"/></svg></button>
        <button class="tb" aria-label="Масса"><svg class="ic" viewBox="0 0 16 16"><ellipse cx="8" cy="6" rx="6" ry="4" fill="#8bbce0" stroke="#397ab0"/><path d="M1 13h14" stroke="#b69848" stroke-width="4"/></svg></button>
        <div class="hsep"></div>
        <button class="tb" aria-label="Список"><svg class="ic" viewBox="0 0 16 16" stroke="#7190a0"><path d="M3 1h9v14H3z" fill="#dbe8ef"/><path d="M5 5h9M5 9h9M5 12h9"/></svg></button>
        <button class="tb" aria-label="Координаты"><svg class="ic" viewBox="0 0 16 16" stroke="#386d9c"><circle cx="9" cy="6" r="4" fill="#d7eafa"/><path d="M12 9l3 5M1 14h14" stroke-width="2"/></svg></button>
      </div>
      <div class="panel end" role="toolbar" aria-label="Express">
        <div class="hgrip"></div>
        <button class="tb" aria-label="Наложение"><svg class="ic" viewBox="0 0 16 16"><path d="M2 13L12 2v11z" stroke="#b72f31"/><path d="M1 10h14M5 6l9 8" stroke="#555"/></svg></button>
        <button class="tb" aria-label="Замена блока"><svg class="ic" viewBox="0 0 16 16"><path d="M5 1l4 4-4 5-4-4z" stroke="#a83434"/><circle cx="8" cy="7" r="3"/><path d="M9 9h6v6H9zM11 2q3 0 3 4" fill="#eee"/></svg></button>
        <div class="hsep"></div>
        <button class="tb" aria-label="Обрезка растра"><svg class="ic" viewBox="0 0 16 16"><path d="M3 3h10v5H3z" fill="#27c" stroke="none"/><path d="M3 8h10v5H3z" fill="#c22" stroke="none"/><path d="M3 1v14M13 1v14M1 3h14M1 13h14" stroke-width="2"/></svg></button>
        <button class="tb" aria-label="Маскировка"><svg class="ic" viewBox="0 0 16 16"><path d="M1 2h14v12H1z" fill="#2868bb"/><path d="M1 7l5-5h9L4 13H1z" fill="#e23444" stroke="none"/><path d="M4 13L14 3" stroke="#fff" stroke-width="3"/></svg></button>
        <button class="tb" aria-label="Поиск в сети"><svg class="ic" viewBox="0 0 16 16"><circle cx="7" cy="6" r="5" fill="#2badab" stroke="#087477"/><path d="M4 3q7-1 5 6" stroke="#65d36d" stroke-width="2.500"/><circle cx="11" cy="10" r="3.500" fill="#fff" stroke="#777"/><path d="M9 13l-3 3"/></svg></button>
        <button class="tb" aria-label="Линия обрыва"><svg class="ic" viewBox="0 0 16 16"><path d="M1 8h4l2-4 3 8 2-4h4" stroke="#555" stroke-width="1.600"/></svg></button>
        <div class="hsep"></div>
        <button class="tb" aria-label="Быстрый выбор"><svg class="ic" viewBox="0 0 16 16"><path d="M2 2v12h13M2 8h3" stroke-dasharray="2 1"/><path d="M14 1L6 7h4l-5 6 9-7h-4z" fill="#fbe72d" stroke="#666128" stroke-width="1"/></svg></button>
        <div class="hsep"></div>
        <button class="tb" aria-label="Множественное копирование"><svg class="ic" viewBox="0 0 16 16"><circle cx="4" cy="4" r="3"/><circle cx="6" cy="11" r="3"/><circle cx="12" cy="11" r="3" fill="#fff"/><path d="M2 8v7M9 3q4-2 5 3m-3-1l3 2 2-3"/></svg></button>
      </div>
      <div class="panel end" role="toolbar" aria-label="Текст Express">
        <div class="hgrip"></div>
        <button class="tb" aria-label="Вписать текст"><svg class="ic" viewBox="0 0 16 16" stroke-width="1.200"><path d="M1 7l1.500-5L4 7M2 5h2M7 2v5h2V2H7m0 2h2M15 2h-3v5h3M1 12h14" /><path d="M2 10v4M14 10v4" stroke-width="2"/></svg></button>
        <button class="tb" aria-label="Маска текста"><svg class="ic" viewBox="0 0 16 16" stroke-width="1.200"><path d="M3 11l1.500-6L6 11M4 9h2M7 5v6h2V5H7m0 3h2M13 5h-2v6h2M1 1l3 3M15 1l-3 3M1 15l3-3M15 15l-3-3M8 1v2M8 13v2"/></svg></button>
        <button class="tb" aria-label="Расчленить текст"><svg class="ic" viewBox="0 0 16 16" stroke-width="1.200"><path d="M3 8l7-6" stroke="#b32b2b" stroke-width="4"/><path d="M11 2l3-2M12 4l4-1" stroke="#c22"/><path d="M0 15l1.500-5L3 15M1 13h2M5 10v5h2v-5H5m0 2h2M11 10H9v5h2M13 10v5h2v-5z"/></svg></button>
        <button class="tb" aria-label="Текст по дуге"><svg class="ic" viewBox="0 0 16 16" stroke-width="1.200"><path d="M1 10l2-5 1 5M2 8h2M7 3v5h2V3H7m0 2h2M14 5h-2v5h3M1 14q7-5 14 0"/></svg></button>
      </div>
    </div>
  </aside>
</main>

<div class="splitter flex-shrink-0"></div>

<section class="command d-flex align-items-start flex-shrink-0">
  <span class="grip cgrip"></span>
  <div class="console flex-grow-1">
    <div class="log d-flex">
      <div class="flex-grow-1"><p>Команда:</p><p>Команда: _erase найдено: 1</p></div>
      <div><button class="sb" aria-label="Вверх"><svg viewBox="0 0 6 6"><path d="M0 5h6L3 1z"/></svg></button><button class="sb" aria-label="Вниз"><svg viewBox="0 0 6 6"><path d="M0 1h6L3 5z"/></svg></button></div>
    </div>
    <div class="prompt d-flex align-items-center">
      <label for="cmd">Команда:</label><input id="cmd" class="flex-grow-1" type="text">
      <button class="sb" aria-label="Влево"><svg viewBox="0 0 6 6"><path d="M5 0v6L1 3z"/></svg></button><button class="sb" aria-label="Ползунок"></button><span class="gutter"></span><button class="sb" aria-label="Вправо"><svg viewBox="0 0 6 6"><path d="M1 0v6l4-3z"/></svg></button><span class="corner"></span>
    </div>
  </div>
</section>

<footer class="status d-flex align-items-start flex-shrink-0">
  <div class="coords">530.98, 911.54, 0.00</div>
  <div class="modes d-flex flex-grow-1">
    <button class="mode">ШАГ</button><button class="mode">СЕТКА</button><button class="mode">ОРТО</button><button class="mode down">ОТС-ПОЛЯР</button><button class="mode down">ПРИВЯЗКА</button><button class="mode down">ОТС-ОБЪЕКТ</button><button class="mode down">ДПСК</button><button class="mode down">ДИН</button><button class="mode">ВЕС</button><button class="mode down">МОДЕЛЬ</button>
  </div>
  <span class="me-2">Масштаб аннотаций:</span><span>1:1 ▾</span>
  <svg class="ic ms-2" width="14" height="14" viewBox="0 0 14 14"><path d="M1 12L11 2" stroke="#4a7ba8"/><circle cx="8" cy="4" r="3" fill="#ffef69" stroke="#8d873b"/></svg>
  <svg class="ic ms-1" width="14" height="14" viewBox="0 0 14 14"><path d="M1 12L11 1v6L4 12" stroke="#999"/></svg>
  <span class="mode down ms-1 px-1"><svg class="ic" width="12" height="12" viewBox="0 0 12 12"><path d="M6 5V2q3-2 5 0v3" stroke="#8c7b23"/><path d="M1 5h7v6H1z" fill="#eadb45" stroke="#756d21"/></svg></span>
  <svg class="ic ms-3" width="13" height="13" viewBox="0 0 13 13"><path d="M1 1h11v11H1z" fill="#cfe3f7" stroke="#4176ae" stroke-width="2"/></svg>
</footer>
</div>

<aside class="callout">
  <div class="bubble d-flex align-items-center justify-content-center">вот лекало верха платья с<br>драпировкой</div>
  <svg class="tail" viewBox="0 0 102 30"><defs><linearGradient id="tailFill"><stop offset="0" stop-color="#3737a8"/><stop offset=".3" stop-color="#8686cc"/><stop offset=".8" stop-color="#b5b5e2"/><stop offset="1" stop-color="#8c8cd0"/></linearGradient></defs><path d="M102 2L1 28l101-6z" fill="url(#tailFill)"/><path d="M99 2L1 28l98-6" fill="none" stroke="#14148c" stroke-width="1.500"/></svg>
</aside>
</div>
</body>
</html>
